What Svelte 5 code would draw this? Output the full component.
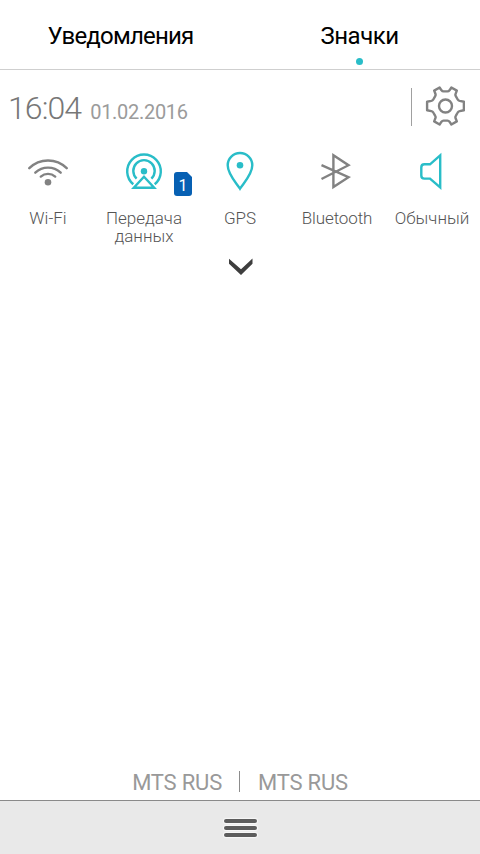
<script lang="ts">
  type Toggle = { id: string; label: string; active: boolean; sim?: number };

  const tabs = ["Уведомления", "Значки"];
  let current = $state(1);

  let toggles = $state<Toggle[]>([
    { id: "wifi", label: "Wi-Fi", active: false },
    { id: "data", label: "Передача данных", active: true, sim: 1 },
    { id: "gps", label: "GPS", active: true },
    { id: "bluetooth", label: "Bluetooth", active: false },
    { id: "sound", label: "Обычный", active: true },
  ]);

  const carriers = ["MTS RUS", "MTS RUS"];
</script>

<div class="shade">
  <nav class="tabs">
    {#each tabs as tab, i}
      <button class="tab" class:current={i === current} onclick={() => (current = i)}>
        <span>{tab}</span>
      </button>
    {/each}
  </nav>

  <header class="status">
    <span class="time">16:04</span>
    <span class="date">01.02.2016</span>
    <button class="settings" aria-label="Настройки">
      <svg width="40" height="40" viewBox="0 0 40 40">
        <path
          d="M9.2 4.6 L14.6 1.5 L16.5 4.3 Q17.3 5.4 18.5 5.4 H22.5 Q23.7 5.4 24.5 4.3 L26.4 1.5 L31.8 4.6 L30.6 7.8 Q30.1 9.1 30.8 10.2 L32.7 13.5 Q33.3 14.6 34.7 14.9 L38.9 15.7 V24.3 L34.7 25.1 Q33.3 25.4 32.7 26.5 L30.8 29.8 Q30.1 30.9 30.6 32.2 L31.8 35.4 L26.4 38.5 L24.5 35.7 Q23.7 34.6 22.5 34.6 H18.5 Q17.3 34.6 16.5 35.7 L14.6 38.5 L9.2 35.4 L10.4 32.2 Q10.9 30.9 10.2 29.8 L8.3 26.5 Q7.7 25.4 6.3 25.1 L2.1 24.3 V15.7 L6.3 14.9 Q7.7 14.6 8.3 13.5 L10.2 10.2 Q10.9 9.1 10.4 7.8 Z"
        />
        <circle cx="20.5" cy="20" r="6.5" />
      </svg>
    </button>
  </header>

  <section class="toggles">
    {#each toggles as t (t.id)}
      <button class="toggle {t.id}" class:active={t.active} onclick={() => (t.active = !t.active)}>
        <span class="icon">
          <svg width="40" height="40" viewBox="0 0 40 40">
            {#if t.id === "wifi"}
              <g stroke-linecap="round">
                <path d="M1.3 17.2 A26.5 26.5 0 0 1 38.7 17.2" />
                <path d="M7.3 21.7 A18.5 18.5 0 0 1 32.7 21.7" />
                <path d="M12.8 25.6 A11 11 0 0 1 27.2 25.6" />
              </g>
              <circle class="solid" cx="20" cy="31.2" r="3.3" />
            {:else if t.id === "data"}
              <path d="M9.3 33.3 A16.8 16.8 0 1 1 30.7 33.3" />
              <path d="M12.6 27.6 A10.7 10.7 0 1 1 27.4 27.6" />
              <circle class="solid" cx="20" cy="20.2" r="3.2" />
              <path d="M20 25.8 L30.2 36.7 H9.8 Z" />
            {:else if t.id === "gps"}
              <path d="M20 37.7 C16 31.5 7.7 23.3 7.7 14.3 C7.7 7.4 13.2 2 20 2 C26.8 2 32.3 7.4 32.3 14.3 C32.3 23.3 24 31.5 20 37.7 Z" />
              <circle class="solid" cx="20" cy="14.2" r="3.3" />
            {:else if t.id === "bluetooth"}
              <path d="M4.5 14.2 L31.5 26.2 L16.4 36 V4.2 L31.5 14.2 L4.5 28" />
            {:else}
              <path d="M18 13.3 H12.4 Q9.3 13.3 9.3 16.4 V24.5 Q9.3 27.6 12.4 27.6 H18 L28.2 36.4 V4.4 Z" />
            {/if}
          </svg>
          {#if t.sim}
            <span class="sim">{t.sim}</span>
          {/if}
        </span>
        <span class="label">{t.label}</span>
      </button>
    {/each}
  </section>

  <button class="expand" aria-label="Развернуть">
    <svg width="24" height="18" viewBox="0 0 24 18">
      <path d="M0 0.8 L12 11.2 L23.5 0.5 V5.7 L12 17 L0 5.7 Z" />
    </svg>
  </button>

  <footer class="carriers">
    {#each carriers as name}
      <span>{name}</span>
    {/each}
  </footer>

  <div class="handle">
    <i></i>
    <i></i>
    <i></i>
  </div>
</div>

<style>
  :global(body) {
    margin: 0;
    background: #fff;
  }

  .shade {
    --accent: #29bdc8;
    --grey: #828282;
    display: flex;
    flex-direction: column;
    width: 480px;
    height: 854px;
    overflow: hidden;
    background: #fff;
    font-family: Roboto, "Noto Sans", sans-serif;
  }

  button {
    padding: 0;
    border: 0;
    background: none;
    font: inherit;
    color: inherit;
  }

  svg {
    display: block;
    fill: none;
  }

  .tabs {
    display: grid;
    grid-template-columns: 1fr 1fr;
    height: 69px;
    border-bottom: 1px solid #cfcfcf;
  }

  .tab {
    display: flex;
    flex-direction: column;
    align-items: center;
    padding: 22px 0 0 1px;
    font-size: 24px;
    line-height: 28px;
    letter-spacing: -0.8px;
    color: #000;
  }

  .tab + .tab {
    padding: 22px 1px 0 0;
    letter-spacing: -0.5px;
  }

  .tab.current::after {
    content: "";
    width: 7px;
    height: 7px;
    margin-top: 8px;
    border-radius: 50%;
    background: var(--accent);
  }

  .status {
    display: flex;
    align-items: baseline;
    height: 76px;
    padding: 0 15px 0 8px;
  }

  .time {
    font-size: 32px;
    font-weight: 300;
    line-height: 76px;
    letter-spacing: -0.9px;
    color: #777;
  }

  .date {
    margin-left: 9px;
    font-size: 20px;
    letter-spacing: -0.3px;
    color: #9b9b9b;
  }

  .settings {
    align-self: flex-start;
    margin: 18px 0 0 auto;
    padding-left: 13px;
    height: 38px;
    border-left: 1px solid #a0a0a0;
  }

  .settings svg {
    margin-top: -2px;
    stroke: var(--grey);
    stroke-width: 2.4;
    stroke-linejoin: round;
  }

  .toggles {
    display: grid;
    grid-template-columns: repeat(5, 96px);
    height: 106px;
  }

  .toggle {
    display: flex;
    flex-direction: column;
    align-items: center;
    padding-top: 5px;
    color: var(--grey);
  }

  .toggle.active {
    color: var(--accent);
  }

  .toggle.bluetooth {
    padding-left: 2px;
    letter-spacing: -0.1px;
  }

  .icon {
    position: relative;
  }

  .icon svg {
    stroke: currentColor;
    stroke-width: 2.4;
  }

  .icon .solid {
    fill: currentColor;
    stroke: none;
  }

  .sim {
    position: absolute;
    top: 21px;
    left: 50px;
    width: 18px;
    height: 24px;
    border-radius: 3px;
    clip-path: polygon(0 0, 13px 0, 100% 5px, 100% 100%, 0 100%);
    background: #0760b3;
    color: #fff;
    font-size: 16px;
    line-height: 27px;
    text-align: center;
  }

  .label {
    width: 90px;
    margin-top: 18px;
    font-size: 17px;
    font-weight: 300;
    line-height: 18px;
    text-align: center;
    color: #555;
  }

  .expand {
    align-self: center;
    margin: 6px 0 0 1px;
  }

  .expand svg {
    fill: #3e3e3e;
  }

  .carriers {
    display: flex;
    justify-content: center;
    margin: auto 1px 0 0;
    padding-bottom: 8px;
    font-size: 22px;
    line-height: 24px;
    letter-spacing: -0.2px;
    color: #999;
  }

  .carriers span {
    padding: 0 17px 0 18px;
    height: 21px;
  }

  .carriers span + span {
    border-left: 1px solid #8c8c8c;
  }

  .handle {
    display: flex;
    flex-direction: column;
    align-items: center;
    gap: 3px;
    height: 35px;
    padding-top: 18px;
    border-top: 1px solid #8a8a8a;
    background: #e9e9e9;
  }

  .handle i {
    width: 33px;
    height: 4px;
    border-radius: 2px;
    background: #5c5c5c;
    box-shadow: 0 0 1px 1px #f8f8f8;
  }
</style>
